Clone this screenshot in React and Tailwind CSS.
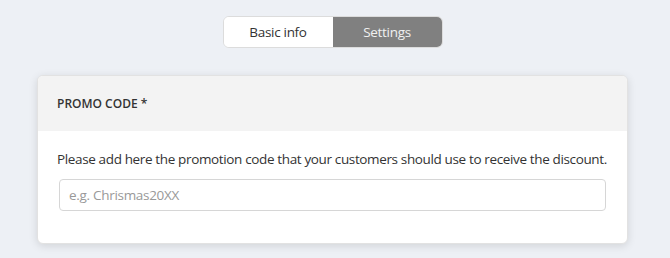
export default function App() {
  return (
    <div className="min-h-[258px] w-[670px] bg-[#edf0f5] pt-4 font-['Open_Sans',sans-serif] text-[#333]">
      <div className="ml-[37px] w-[591px]">
        <div className="flex justify-center">
          <div className="flex h-8 overflow-hidden rounded-md border border-[#dcdcdc] bg-white text-[13.5px] tracking-[-0.3px]">
            <button className="w-[109px] bg-white text-[#333]">Basic info</button>
            <button className="w-[109px] bg-[#808080] text-[#f0f0f0]">Settings</button>
          </div>
        </div>
        <div className="mt-[27px] overflow-hidden rounded-md border border-[#e2e2e2] bg-white shadow-[0_2px_8px_rgba(0,0,0,0.12)]">
          <div className="flex h-[55px] items-center bg-[#f3f3f3] px-[19px] text-[12px] font-semibold">PROMO CODE *</div>
          <div className="px-[19px] pb-8 pt-[18px]">
            <p className="whitespace-nowrap text-[13.5px] leading-5 tracking-[-0.36px]">Please add here the promotion code that your customers should use to receive the discount.</p>
            <input
              className="mt-[10px] ml-[2px] h-8 w-[547px] rounded border border-[#d6d6d6] px-[9px] text-[13.5px] tracking-[-0.3px] outline-none placeholder:text-[#999]"
              placeholder="e.g. Chrismas20XX"
            />
          </div>
        </div>
      </div>
    </div>
  );
}
